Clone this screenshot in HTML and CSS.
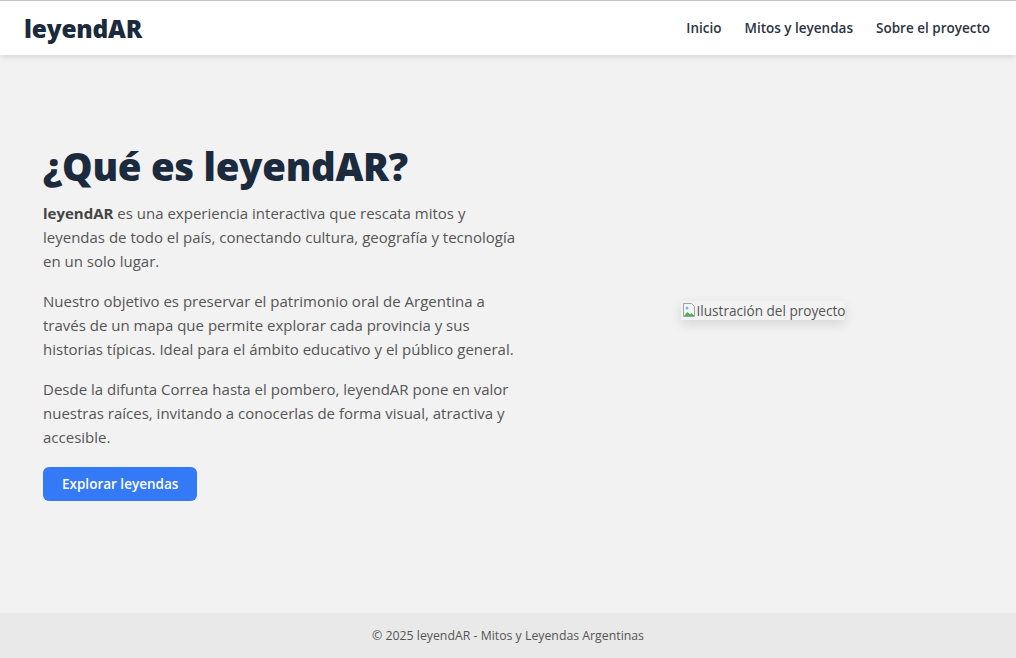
FILE: index.html
```html
<!DOCTYPE html>
<html lang="es">
<head>
<meta charset="utf-8">
<title>leyendAR</title>
<link rel="stylesheet" href="styles.css">
</head>
<body>
<header class="topbar">
  <a class="logo" href="#">leyendAR</a>
  <nav class="nav">
    <a href="#">Inicio</a>
    <a href="#">Mitos y leyendas</a>
    <a href="#">Sobre el proyecto</a>
  </nav>
</header>
<main class="hero">
  <section class="intro">
    <h1>¿Qué es leyendAR?</h1>
    <p><strong>leyendAR</strong> es una experiencia interactiva que rescata mitos y leyendas de todo el país, conectando cultura, geografía y tecnología en un solo lugar.</p>
    <p>Nuestro objetivo es preservar el patrimonio oral de Argentina a través de un mapa que permite explorar cada provincia y sus historias típicas. Ideal para el ámbito educativo y el público general.</p>
    <p>Desde la difunta Correa hasta el pombero, leyendAR pone en valor nuestras raíces, invitando a conocerlas de forma visual, atractiva y accesible.</p>
    <a class="btn" href="#">Explorar leyendas</a>
  </section>
  <section class="visual">
    <span class="broken">
      <svg class="broken-icon" width="16" height="16" viewBox="0 0 16 16" aria-hidden="true">
        <path d="M2.5 1.5h8l3 3v10h-11z" fill="#f4f6f8" stroke="#9aa3ad" stroke-width="1"/>
        <path d="M3 14l3.5-4 2.5 2.5 1.5-1.5 3 3z" fill="#4caf50"/>
        <circle cx="6" cy="6" r="1.5" fill="#7fb3e0"/>
      </svg><span class="alt">Ilustración del proyecto</span>
    </span>
  </section>
</main>
<footer class="footer">© 2025 leyendAR - Mitos y Leyendas Argentinas</footer>
</body>
</html>
```
FILE: styles.css
```css
* { box-sizing: border-box; }
html, body { height: 100%; }
body {
  margin: 0;
  font-family: "Open Sans", "DejaVu Sans", sans-serif;
  background: #f2f2f2;
  color: #555;
  display: flex;
  flex-direction: column;
}
a { text-decoration: none; }

.topbar {
  height: 55px;
  background: #fff;
  border-top: 1px solid #c4c4c4;
  box-shadow: 0 2px 6px rgba(0,0,0,0.12);
  display: flex;
  align-items: center;
  justify-content: space-between;
  padding: 0 26px 0 24px;
  position: relative;
  z-index: 1;
}
.logo {
  font-size: 24.5px;
  font-weight: 800;
  color: #1c2a3d;
  letter-spacing: -0.2px;
}
.nav {
  display: flex;
  gap: 23px;
}
.nav a {
  font-size: 13.5px;
  font-weight: 600;
  color: #2b3443;
}

.hero {
  flex: 1;
  display: grid;
  grid-template-columns: 480px 1fr;
  gap: 30px;
  align-items: center;
  padding: 0 43px 24px 43px;
}
.intro h1 {
  margin: 0 0 12px;
  font-size: 38.4px;
  font-weight: 800;
  color: #1c2a3d;
  line-height: 1.2;
  letter-spacing: -0.3px;
}
.intro p {
  margin: 0 0 16px;
  font-size: 15px;
  line-height: 24px;
  color: #555;
}
.intro strong { color: #444; font-weight: 700; }
.btn {
  display: inline-block;
  margin-top: 2px;
  background: #3479f5;
  color: #fff;
  font-size: 13.5px;
  font-weight: 600;
  padding: 8px 19px;
  border-radius: 6px;
  line-height: 18px;
}

.visual {
  display: flex;
  justify-content: center;
  align-items: center;
  padding-bottom: 24px;
}
.broken {
  display: inline-flex;
  align-items: center;
  box-shadow: 0 4px 12px rgba(0,0,0,0.12);
  font-size: 13.6px;
  color: #555;
}
.broken-icon { display: block; }

.footer {
  height: 45px;
  background: #e9e9e9;
  display: flex;
  align-items: center;
  justify-content: center;
  font-size: 12.3px;
  color: #555;
}
```
